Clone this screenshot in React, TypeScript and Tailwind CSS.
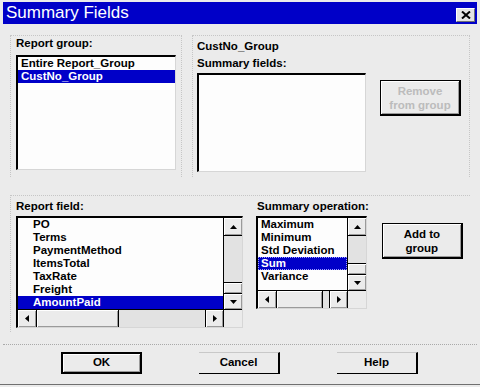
import React from 'react'

type Dir = 'up' | 'down' | 'left' | 'right'

function Arrow({ dir }: { dir: Dir }) {
  const vert = dir === 'up' || dir === 'down'
  const w = vert ? 7 : 4
  const h = vert ? 4 : 7
  const pts = { up: '0,4 7,4 3.5,0', down: '0,0 7,0 3.5,4', left: '4,0 4,7 0,3.5', right: '0,0 0,7 4,3.5' }[dir]
  return (
    <svg width={w} height={h} viewBox={`0 0 ${w} ${h}`}>
      <polygon points={pts} fill="#000" />
    </svg>
  )
}

const bevel = 'bg-[#ebebeb] shadow-[inset_1px_1px_0_#ffffff,inset_-1px_-1px_0_#9a9a9a]'

function VScroll() {
  return (
    <div className="w-[19px] flex flex-col border-l border-black bg-[#e2e2e2]">
      <div className={`h-[18px] flex items-center justify-center border-b border-black ${bevel}`}>
        <Arrow dir="up" />
      </div>
      <div className="flex-1" />
      <div className={`h-[12px] border-y border-black ${bevel}`} />
      <div className={`h-[15px] flex items-center justify-center ${bevel}`}>
        <Arrow dir="down" />
      </div>
    </div>
  )
}

function HScroll({ thumb }: { thumb: string }) {
  return (
    <div className="h-[18px] flex border-t border-black bg-[#e2e2e2]">
      <div className={`w-[19px] flex items-center justify-center border-r border-black ${bevel}`}>
        <Arrow dir="left" />
      </div>
      <div className={`${thumb} border-r border-black ${bevel}`} />
      <div className="flex-1" />
      <div className={`w-[18px] flex items-center justify-center border-l border-black ${bevel}`}>
        <Arrow dir="right" />
      </div>
      <div className="w-[19px] border-l border-black bg-[#ebebeb]" />
    </div>
  )
}

interface ListProps {
  items: string[]
  selected: number
  className: string
  indent?: string
  scroll?: boolean
  focus?: boolean
  thumb?: string
}

function ListBox({ items, selected, className, indent = 'pl-[3px]', scroll, focus, thumb = 'w-[80px]' }: ListProps) {
  return (
    <div className={`flex flex-col bg-[#fdfdfd] border-t-2 border-l-2 border-t-black border-l-black border-r border-b border-r-[#d6d6d6] border-b-[#d6d6d6] ${className}`}>
      <div className="flex flex-1 min-h-0">
        <div className="flex-1 min-w-0 overflow-hidden">
          {items.map((it, i) => (
            <div
              key={it}
              className={`h-[13px] leading-[13px] whitespace-nowrap ${indent} ${
                i === selected ? 'bg-[#0000c8] text-white' : 'text-black'
              } ${i === selected && focus ? 'outline outline-1 outline-dotted outline-[#9fa0ff] -outline-offset-1' : ''}`}
            >
              {it}
            </div>
          ))}
        </div>
        {scroll && <VScroll />}
      </div>
      {scroll && <HScroll thumb={thumb} />}
    </div>
  )
}

function SideButton({ lines, disabled }: { lines: string[]; disabled?: boolean }) {
  return (
    <button
      className={`w-[81px] h-[36px] flex flex-col items-center justify-center border border-black border-r-2 border-b-2 leading-[14px] ${bevel} ${
        disabled ? 'text-[#bcbcbc]' : 'text-black'
      }`}
    >
      {lines.map((l) => (
        <span key={l}>{l}</span>
      ))}
    </button>
  )
}

export default function App() {
  return (
    <div className="w-[480px] h-[387px] bg-[#ebebeb] flex flex-col font-['Liberation_Sans',Arial,sans-serif] text-[11.5px] font-bold text-black select-none">
      {/* barra de titulo */}
      <div className="mt-[2px] mx-[3px] h-[22px] bg-[#0000c8] flex items-start justify-between pl-[3px] pr-[2px]">
        <span className="text-white text-[17px] font-normal leading-[22px]">Summary Fields</span>
        <div className="mt-[6px] w-[19px] h-[14px] bg-[#e4e4e4] border-t border-l border-white border-r border-b border-r-[#707070] border-b-[#707070] flex items-center justify-center">
          <svg width="10" height="8" viewBox="0 0 10 8">
            <path d="M1 0.5 L9 7.5 M9 0.5 L1 7.5" stroke="#000" strokeWidth="2" />
          </svg>
        </div>
      </div>

      <div className="px-[10px] mt-[11px]">
        {/* linha superior */}
        <div className="flex gap-[10px] h-[142px]">
          <div className="w-[172px] border border-dotted border-[#c6c6c6] border-b-0 pl-[5px]">
            <div className="h-[19px] leading-[14px]">Report group:</div>
            <ListBox
              items={['Entire Report_Group', 'CustNo_Group']}
              selected={1}
              className="w-[160px] h-[115px]"
            />
          </div>
          <div className="w-[278px] border border-dotted border-[#c6c6c6] border-b-0 pl-[4px] pt-[3px]">
            <div className="h-[17px] leading-[14px]">CustNo_Group</div>
            <div className="h-[17px] leading-[14px]">Summary fields:</div>
            <div className="flex">
              <ListBox items={[]} selected={-1} className="w-[169px] h-[99px]" />
              <div className="ml-[14px] mt-[7px]">
                <SideButton lines={['Remove', 'from group']} disabled />
              </div>
            </div>
          </div>
        </div>

        {/* grupo inferior */}
        <div className="mt-[18px] h-[137px] border border-dotted border-[#c6c6c6] border-r-0 border-b-0 pl-[5px] pt-[3px] flex">
          <div>
            <div className="h-[17px] leading-[14px]">Report field:</div>
            <ListBox
              items={['PO', 'Terms', 'PaymentMethod', 'ItemsTotal', 'TaxRate', 'Freight', 'AmountPaid']}
              selected={6}
              indent="pl-[15px]"
              scroll
              thumb="w-[82px]"
              className="w-[227px] h-[112px]"
            />
          </div>
          <div className="ml-[13px]">
            <div className="h-[17px] leading-[14px] pl-px">Summary operation:</div>
            <ListBox
              items={['Maximum', 'Minimum', 'Std Deviation', 'Sum', 'Variance']}
              selected={3}
              indent="pl-[3px]"
              scroll
              focus
              thumb="w-[46px]"
              className="w-[111px] h-[93px]"
            />
          </div>
          <div className="ml-[13px] mt-[24px]">
            <SideButton lines={['Add to', 'group']} />
          </div>
        </div>
      </div>

      {/* separador */}
      <div className="mt-[12px] mx-[3px] border-t border-dotted border-[#a9a9a9]" />

      {/* botoes */}
      <div className="mt-[7px] pl-[61px] flex gap-[57px]">
        <button className={`w-[81px] h-[22px] border-2 border-black ${bevel}`}>OK</button>
        <button className="w-[81px] h-[22px] bg-[#ebebeb] border-t border-t-[#c8c8c8] border-r-2 border-r-black border-b border-b-black">Cancel</button>
        <button className="w-[81px] h-[22px] bg-[#ebebeb] border-t border-t-[#c8c8c8] border-r-2 border-r-black border-b border-b-black">Help</button>
      </div>

      <div className="mt-auto mb-[2px] h-[1px] bg-[#707070]" />
    </div>
  )
}
